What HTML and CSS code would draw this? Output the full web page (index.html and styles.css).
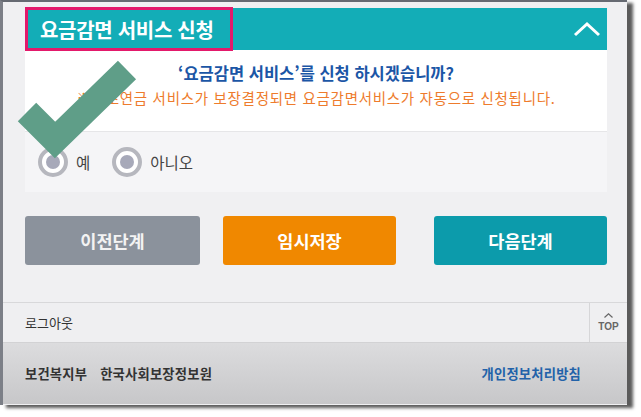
FILE: index.html
```html
<!DOCTYPE html>
<html lang="ko">
<head>
<meta charset="utf-8">
<title>요금감면 서비스 신청</title>
<link rel="stylesheet" href="styles.css">
</head>
<body>
<div class="window">
  <svg class="check" width="160" height="170" viewBox="0 0 160 170" aria-hidden="true">
    <polyline points="27,112 55,140 127,70" fill="none" stroke="#5f9e88" stroke-width="26" stroke-linejoin="miter" stroke-linecap="butt"/>
  </svg>
  <main class="content">
    <section class="panel">
      <div class="panel-head">
        <h2 class="panel-title">요금감면 서비스 신청</h2>
        <span class="chev">
          <svg width="28" height="16" viewBox="0 0 28 16"><polyline points="2,14 14,3 26,14" fill="none" stroke="#fff" stroke-width="3"/></svg>
        </span>
      </div>
      <div class="panel-body">
        <p class="question">‘요금감면 서비스’를 신청 하시겠습니까?</p>
        <p class="note">※기초연금 서비스가 보장결정되면 요금감면서비스가 자동으로 신청됩니다.</p>
      </div>
      <div class="radios">
        <label class="radio"><span class="dot"></span><span class="rlabel">예</span></label>
        <label class="radio"><span class="dot"></span><span class="rlabel">아니오</span></label>
      </div>
    </section>
    <div class="buttons">
      <button class="btn btn-prev">이전단계</button>
      <button class="btn btn-save">임시저장</button>
      <button class="btn btn-next">다음단계</button>
    </div>
  </main>
  <footer class="footer">
    <div class="logout-row">
      <span class="logout">로그아웃</span>
      <a class="top">
        <svg class="caret" width="9" height="5" viewBox="0 0 9 5"><polyline points="0.5,4.5 4.5,0.8 8.5,4.5" fill="none" stroke="#666" stroke-width="1.2"/></svg>
        <span class="toptext">TOP</span>
      </a>
    </div>
    <div class="bottom-bar">
      <span class="org">보건복지부</span>
      <span class="org">한국사회보장정보원</span>
      <span class="privacy">개인정보처리방침</span>
    </div>
  </footer>
</div>
</body>
</html>
```

FILE: styles.css
```css
* { box-sizing: border-box; }
html, body { margin: 0; padding: 0; }
body {
  background: #ffffff;
  font-family: "Noto Sans CJK KR", "Noto Sans", sans-serif;
  width: 641px;
  height: 417px;
  overflow: hidden;
}
.window {
  position: relative;
  width: 627px;
  height: 405px;
  background: #f0f0f2;
  border-top: 2px solid #666a72;
  border-left: 3px solid #7c7f87;
  box-shadow: 6px 3px 3px rgba(50, 50, 50, 0.8);
  display: flex;
  flex-direction: column;
}
.check {
  position: absolute;
  left: -3px;
  top: -2px;
  z-index: 5;
}
.content {
  padding: 6px 20px 37px 22px;
}
.panel-head {
  height: 42px;
  background: #13adb7;
  display: flex;
  align-items: stretch;
  justify-content: space-between;
}
.panel-title {
  margin: -1px 0;
  width: 208px;
  border: 3px solid #e3196b;
  color: #ffffff;
  font-size: 20px;
  font-weight: 700;
  display: flex;
  align-items: center;
  padding-left: 12px;
  letter-spacing: -0.3px;
}
.chev {
  display: flex;
  align-items: center;
  padding-right: 6px;
}
.chev svg { display: block; }
.panel-body {
  background: #ffffff;
  padding: 13px 0 0;
  height: 82px;
  border-bottom: 1px solid #e6e6e8;
  text-align: center;
}
.question {
  margin: 0;
  font-size: 16.5px;
  line-height: 20px;
  font-weight: 700;
  color: #1b56a6;
}
.note {
  margin: 6px 0 0;
  font-size: 14.5px;
  line-height: 18px;
  color: #ee7b2c;
  letter-spacing: 0.7px;
}
.radios {
  height: 60px;
  background: #f5f5f7;
  display: flex;
  align-items: center;
  gap: 22px;
  padding-left: 13px;
}
.radio {
  display: flex;
  align-items: center;
  gap: 8px;
}
.dot {
  width: 30px;
  height: 30px;
  border-radius: 50%;
  border: 4px solid #b6b7be;
  background: #ffffff;
  display: flex;
  align-items: center;
  justify-content: center;
}
.dot::after {
  content: "";
  width: 14px;
  height: 14px;
  border-radius: 50%;
  background: #a7a9b9;
}
.rlabel {
  font-size: 15.5px;
  color: #444;
}
.buttons {
  margin-top: 24px;
  display: flex;
}
.btn {
  height: 49px;
  border: none;
  border-radius: 3px;
  font-family: inherit;
  font-size: 17.5px;
  font-weight: 700;
  color: #ffffff;
  padding: 0;
}
.btn-prev { width: 175px; background: #8b929c; color: #f3f3f3; }
.btn-save { width: 173px; margin-left: 23px; background: #f08800; }
.btn-next { width: 173px; margin-left: 38px; background: #0c9bab; }
.footer {
  border-top: 1px solid #d8d8da;
}
.logout-row {
  height: 40px;
  display: flex;
  align-items: stretch;
  justify-content: space-between;
  background: #efeff1;
  border-bottom: 1px solid #d2d2d4;
}
.logout {
  padding-left: 22px;
  font-size: 13px;
  color: #333;
  display: flex;
  align-items: center;
}
.top {
  width: 38px;
  border-left: 1px solid #d6d6d8;
  display: flex;
  flex-direction: column;
  align-items: center;
  justify-content: center;
  gap: 4px;
  font-family: "Liberation Sans", sans-serif;
  color: #666;
}
.caret { display: block; }
.toptext { font-size: 10px; font-weight: 700; line-height: 10px; }
.bottom-bar {
  height: 61px;
  background: linear-gradient(#dcdcde, #c7c7c9);
  display: flex;
  align-items: center;
  padding-left: 22px;
  font-size: 13.3px;
  font-weight: 700;
  color: #333;
  letter-spacing: 0.2px;
}
.org { margin-right: 13px; }
.privacy {
  margin-left: auto;
  margin-right: 46px;
  color: #2262a9;
}
```
